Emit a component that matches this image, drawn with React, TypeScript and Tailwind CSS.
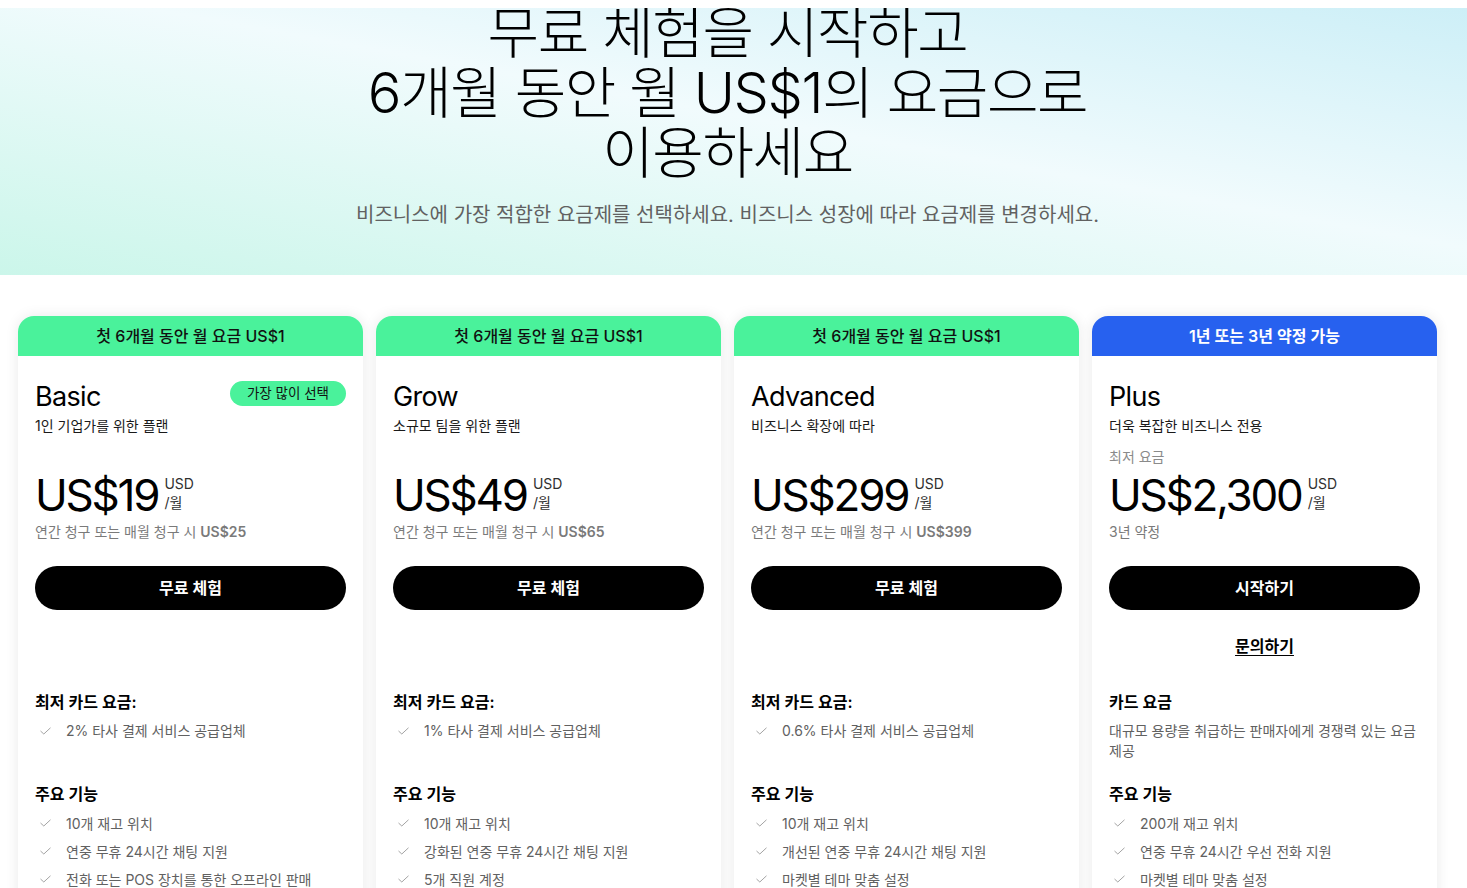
import React from "react";

const FONT = { fontFamily: '"Inter", "Noto Sans CJK KR", sans-serif' } as React.CSSProperties;

type Plan = {
  header: string;
  headerBlue?: boolean;
  name: string;
  badge?: string;
  sub: string;
  minLabel?: string;
  price: string;
  note: React.ReactNode;
  cta: string;
  contact?: boolean;
  feeTitle: string;
  feeItem?: string;
  feeDesc?: string;
  features: string[];
};

const plans: Plan[] = [
  {
    header: "첫 6개월 동안 월 요금 US$1",
    name: "Basic",
    badge: "가장 많이 선택",
    sub: "1인 기업가를 위한 플랜",
    price: "US$19",
    note: (
      <>
        연간 청구 또는 매월 청구 시 <span className="font-semibold">US$25</span>
      </>
    ),
    cta: "무료 체험",
    feeTitle: "최저 카드 요금:",
    feeItem: "2% 타사 결제 서비스 공급업체",
    features: ["10개 재고 위치", "연중 무휴 24시간 채팅 지원", "전화 또는 POS 장치를 통한 오프라인 판매", "기본 보고서"],
  },
  {
    header: "첫 6개월 동안 월 요금 US$1",
    name: "Grow",
    sub: "소규모 팀을 위한 플랜",
    price: "US$49",
    note: (
      <>
        연간 청구 또는 매월 청구 시 <span className="font-semibold">US$65</span>
      </>
    ),
    cta: "무료 체험",
    feeTitle: "최저 카드 요금:",
    feeItem: "1% 타사 결제 서비스 공급업체",
    features: ["10개 재고 위치", "강화된 연중 무휴 24시간 채팅 지원", "5개 직원 계정", "보고서"],
  },
  {
    header: "첫 6개월 동안 월 요금 US$1",
    name: "Advanced",
    sub: "비즈니스 확장에 따라",
    price: "US$299",
    note: (
      <>
        연간 청구 또는 매월 청구 시 <span className="font-semibold">US$399</span>
      </>
    ),
    cta: "무료 체험",
    feeTitle: "최저 카드 요금:",
    feeItem: "0.6% 타사 결제 서비스 공급업체",
    features: ["10개 재고 위치", "개선된 연중 무휴 24시간 채팅 지원", "마켓별 테마 맞춤 설정", "15개 직원 계정"],
  },
  {
    header: "1년 또는 3년 약정 가능",
    headerBlue: true,
    name: "Plus",
    sub: "더욱 복잡한 비즈니스 전용",
    minLabel: "최저 요금",
    price: "US$2,300",
    note: <>3년 약정</>,
    cta: "시작하기",
    contact: true,
    feeTitle: "카드 요금",
    feeDesc: "대규모 용량을 취급하는 판매자에게 경쟁력 있는 요금 제공",
    features: ["200개 재고 위치", "연중 무휴 24시간 우선 전화 지원", "마켓별 테마 맞춤 설정", "무제한 직원 계정"],
  },
];

function Check() {
  return (
    <svg width="11" height="8" viewBox="0 0 11 8" fill="none" className="shrink-0">
      <polyline points="0.5,4 3.8,7 10.5,0.8" stroke="#a3a3a3" strokeWidth="1" fill="none" />
    </svg>
  );
}

function Card({ p }: { p: Plan }) {
  return (
    <div className="w-[345px] rounded-t-[16px] bg-white shadow-[0_0_14px_rgba(0,0,0,0.09)]">
      <div
        className={
          p.headerBlue
            ? "flex h-[40px] items-center justify-center rounded-t-[16px] bg-[#2761ef] text-[16px] font-semibold text-white"
            : "flex h-[40px] items-center justify-center rounded-t-[16px] bg-[#4af29b] text-[16px] font-medium text-[#111]"
        }
      >
        {p.header}
      </div>
      <div className="px-[17px] pt-[24px] pb-[40px]">
        <div className="flex items-start justify-between">
          <div className="text-[27px] leading-[34px] tracking-[-0.025em] text-black">{p.name}</div>
          {p.badge && (
            <div className="mt-[1px] flex h-[25px] items-center rounded-full bg-[#4af29b] px-[17px] text-[13.5px] text-[#111]">
              {p.badge}
            </div>
          )}
        </div>
        <div className="mt-[2px] text-[14px] leading-[20px] text-[#1a1a1a]">{p.sub}</div>
        <div className="mt-[11px] h-[20px] text-[14px] leading-[20px] text-[#8a8a8a]">{p.minLabel ?? ""}</div>
        <div className="mt-[5px] flex items-start">
          <div className="text-[44px] leading-[46px] tracking-[-0.05em] text-black">{p.price}</div>
          <div className="ml-[6px] flex flex-col gap-[3px] pt-[4px] text-[14px] leading-[16px] text-[#303030]">
            <span>USD</span>
            <span>/월</span>
          </div>
        </div>
        <div className="mt-[4px] text-[14px] leading-[20px] text-[#7a7a7a]">{p.note}</div>
        <button className="mt-[24px] flex h-[44px] w-full items-center justify-center rounded-full bg-black text-[16px] font-semibold text-white">
          {p.cta}
        </button>
        <div className="flex h-[80px] justify-center pt-[24px]">
          {p.contact && (
            <span className="h-[24px] text-[16px] font-semibold leading-[24px] text-black underline underline-offset-[3px]">
              문의하기
            </span>
          )}
        </div>
        <div className="h-[92px]">
          <div className="text-[16px] font-semibold leading-[24px] text-black">{p.feeTitle}</div>
          {p.feeItem && (
            <div className="mt-[7px] flex items-center gap-[15px] pl-[5px] text-[14px] leading-[20px] text-[#616161]">
              <Check />
              <span>{p.feeItem}</span>
            </div>
          )}
          {p.feeDesc && <div className="mt-[7px] text-[14px] leading-[20px] text-[#616161]">{p.feeDesc}</div>}
        </div>
        <div className="text-[16px] font-semibold leading-[24px] text-black">주요 기능</div>
        <ul className="mt-[3px]">
          {p.features.map((f) => (
            <li key={f} className="flex h-[28px] items-center gap-[15px] pl-[5px] text-[14px] text-[#616161]">
              <Check />
              <span>{f}</span>
            </li>
          ))}
        </ul>
      </div>
    </div>
  );
}

export default function App() {
  return (
    <div style={FONT} className="min-h-screen w-full overflow-hidden bg-white">
      <div className="h-[8px] bg-white" />
      <section className="flex h-[267px] flex-col overflow-hidden bg-[linear-gradient(to_top_right,#cbf6ea_0%,#f1fbfd_55%,#cdeff7_100%)] pr-[12px]">
        <h1 className="mt-[-5px] text-center text-[56px] font-light leading-[60px] tracking-[-0.025em] text-black">
          무료 체험을 시작하고
          <br />
          6개월 동안 월 US$1의 요금으로
          <br />
          이용하세요
        </h1>
        <p className="mt-[17px] text-center text-[20px] leading-[30px] text-[#616161]">
          비즈니스에 가장 적합한 요금제를 선택하세요. 비즈니스 성장에 따라 요금제를 변경하세요.
        </p>
      </section>
      <div className="flex gap-[13px] pl-[18px] pt-[41px]">
        {plans.map((p) => (
          <Card key={p.name} p={p} />
        ))}
      </div>
    </div>
  );
}
